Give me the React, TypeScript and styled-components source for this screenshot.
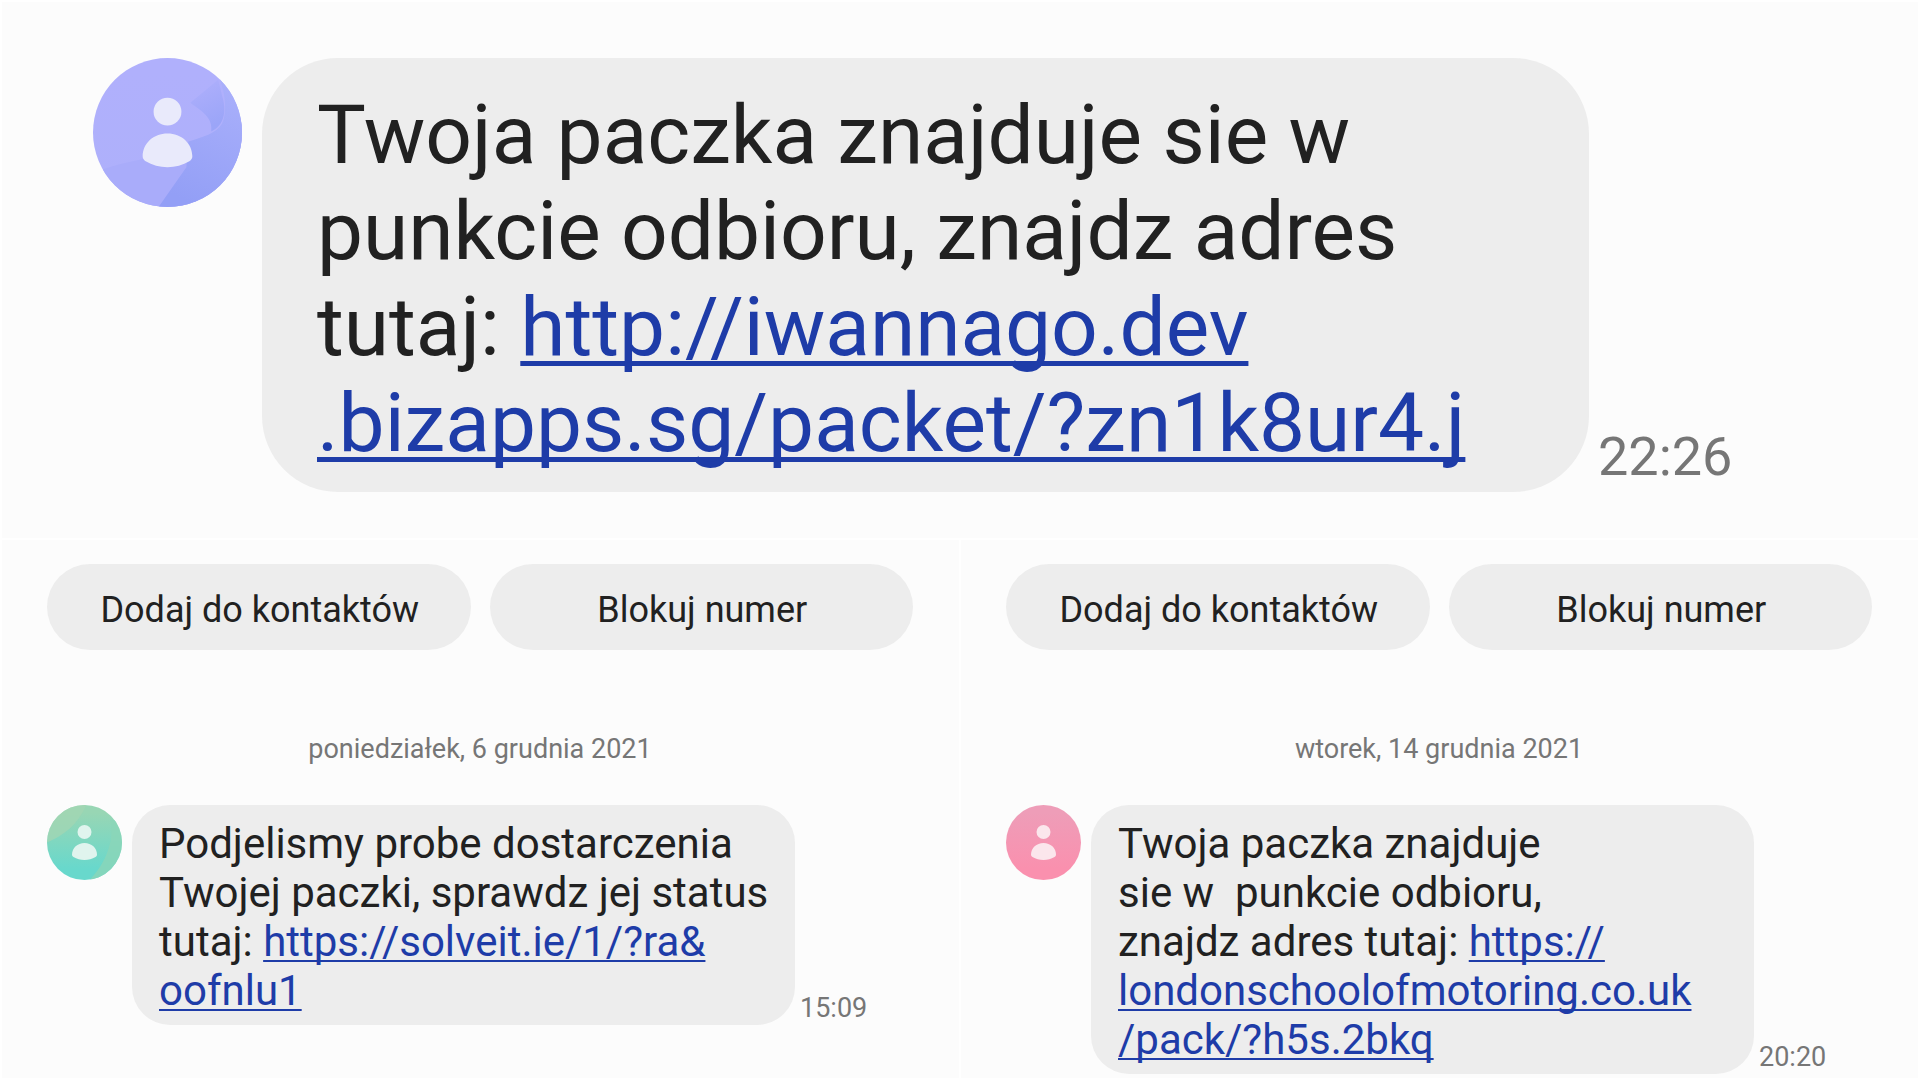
import React from "react";
import styled, { createGlobalStyle } from "styled-components";

const GlobalStyle = createGlobalStyle`
  *, *::before, *::after { box-sizing: border-box; }
  body {
    margin: 0;
    background: #ffffff;
    color: #212121;
    font-family: Roboto, "Noto Sans", sans-serif;
  }
`;

type Size = "large" | "small";

const Board = styled.main`
  display: grid;
  grid-template-columns: 1fr 1fr;
  grid-template-rows: auto 1fr;
  gap: 2px;
  min-height: 100vh;
  padding: 2px;
`;

const Panel = styled.section<{ $wide?: boolean }>`
  grid-column: ${(p) => (p.$wide ? "1 / -1" : "auto")};
  padding: ${(p) => (p.$wide ? "56px 91px 46px" : "24px 46px 4px 45px")};
  background: #fcfcfc;
`;

const Actions = styled.div`
  display: grid;
  grid-template-columns: 1fr 1fr;
  gap: 19px;
`;

const ActionButton = styled.button`
  height: 86px;
  padding: 5px 0 0 2px;
  border: 0;
  border-radius: 43px;
  background: #ededed;
  color: #212121;
  font: 400 36px/42px Roboto, "Noto Sans", sans-serif;
  cursor: pointer;
`;

const DateLabel = styled.time`
  display: block;
  margin: 82px 0 39px;
  color: #767676;
  font-size: 27px;
  line-height: 34px;
  text-align: center;
`;

const Row = styled.article<{ $size: Size }>`
  display: flex;
  align-items: flex-start;
  gap: ${(p) => (p.$size === "large" ? 20 : 10)}px;
`;

const AvatarDrawing = styled.svg<{ $size: Size }>`
  flex: none;
  width: ${(p) => (p.$size === "large" ? 149 : 75)}px;
  height: ${(p) => (p.$size === "large" ? 149 : 75)}px;
`;

const Bubble = styled.p<{ $size: Size }>`
  flex: 0 1 ${(p) => (p.$size === "large" ? 1327 : 663)}px;
  margin: 0;
  padding: ${(p) => (p.$size === "large" ? "29px 40px 21px 55px" : "14px 20px 10px 27px")};
  border-radius: ${(p) => (p.$size === "large" ? 76 : 38)}px;
  background: #ededed;
  font-size: ${(p) => (p.$size === "large" ? 82 : 42)}px;
  line-height: ${(p) => (p.$size === "large" ? 96 : 49)}px;
  white-space: pre-wrap;
`;

const MessageLink = styled.a<{ $size: Size }>`
  color: #1e3ca8;
  text-decoration: underline;
  text-decoration-skip-ink: none;
  text-decoration-thickness: ${(p) => (p.$size === "large" ? 5 : 2)}px;
  text-underline-offset: ${(p) => (p.$size === "large" ? 6 : 4)}px;
`;

const SentAt = styled.time<{ $size: Size }>`
  align-self: flex-end;
  margin-left: ${(p) => (p.$size === "large" ? -11 : -5)}px;
  color: #767676;
  font-size: ${(p) => (p.$size === "large" ? 54 : 27)}px;
  line-height: ${(p) => (p.$size === "large" ? 70 : 34)}px;
`;

type Tone = "violet" | "green" | "pink";

const tones: Record<Tone, { from: string; to: string; person: string }> = {
  violet: { from: "#b0b0fc", to: "#aeb0fb", person: "#e9eafb" },
  green: { from: "#98d6b4", to: "#68d8cc", person: "#e0f4ee" },
  pink: { from: "#ee9db8", to: "#fa90ae", person: "#fbe6ec" },
};

function Avatar({ tone, size }: { tone: Tone; size: Size }) {
  const t = tones[tone];
  return (
    <AvatarDrawing $size={size} viewBox="0 0 150 150" role="img" aria-label="Kontakt">
      <defs>
        <clipPath id={`disc-${tone}`}>
          <circle cx="75" cy="75" r="75" />
        </clipPath>
        <linearGradient id={`base-${tone}`} x1="0" y1="0" x2="0" y2="1">
          <stop offset="0.1" stopColor={t.from} />
          <stop offset="0.85" stopColor={t.to} />
        </linearGradient>
        {tone === "violet" && (
          <>
            <linearGradient id="wave" x1="0.8" y1="0" x2="0.5" y2="1">
              <stop offset="0" stopColor="#aab0fb" />
              <stop offset="1" stopColor="#939ff6" />
            </linearGradient>
            <linearGradient id="fold" x1="0" y1="0" x2="0.3" y2="1">
              <stop offset="0" stopColor="#b0b0fc" />
              <stop offset="1" stopColor="#9ba5f8" />
            </linearGradient>
          </>
        )}
      </defs>
      <g clipPath={`url(#disc-${tone})`}>
        <rect width="150" height="150" fill={`url(#base-${tone})`} />
        {tone === "violet" && (
          <>
            <path d="M10 112C35 104 50 103 66 97C90 90 122 83 150 60V150H0Z" fill="#a9acfa" />
            <path d="M127 20C135 40 134 58 130 66C124 76 110 80 96 84L94 110L66 150H150V20Z" fill="url(#wave)" />
            <path d="M98 45C110 54 121 60 119 74C132 68 134 54 131 42L126 22Z" fill="url(#fold)" />
          </>
        )}
        {tone === "green" && (
          <>
            <path d="M0 75C35 60 60 40 79 0H0Z" fill="#a3d6b3" opacity="0.75" />
            <path d="M126 30C136 65 120 115 85 150H150V30Z" fill="#8bd6b8" opacity="0.8" />
          </>
        )}
      </g>
      <circle cx="75" cy="54" r="14" fill={t.person} />
      <path d="M50 99C50 86 61 76 75 76C89 76 100 86 100 99C100 101 99 103 97 104C84 112 66 112 53 104C51 103 50 101 50 99Z" fill={t.person} />
    </AvatarDrawing>
  );
}

interface MessageProps {
  tone: Tone;
  size: Size;
  time: string;
  children: React.ReactNode;
}

function Message({ tone, size, time, children }: MessageProps) {
  return (
    <Row $size={size}>
      <Avatar tone={tone} size={size} />
      <Bubble $size={size}>{children}</Bubble>
      <SentAt $size={size}>{time}</SentAt>
    </Row>
  );
}

function ContactActions() {
  return (
    <Actions>
      <ActionButton type="button">Dodaj do kontaktów</ActionButton>
      <ActionButton type="button">Blokuj numer</ActionButton>
    </Actions>
  );
}

export default function App() {
  return (
    <>
      <GlobalStyle />
      <Board>
        <Panel $wide>
          <Message tone="violet" size="large" time="22:26">
            Twoja paczka znajduje sie w<br />
            punkcie odbioru, znajdz adres<br />
            tutaj:{" "}
            <MessageLink $size="large" href="#paczka">
              http://iwannago.dev<br />.bizapps.sg/packet/?zn1k8ur4.j
            </MessageLink>
          </Message>
        </Panel>
        <Panel>
          <ContactActions />
          <DateLabel dateTime="2021-12-06">poniedziałek, 6 grudnia 2021</DateLabel>
          <Message tone="green" size="small" time="15:09">
            Podjelismy probe dostarczenia<br />
            Twojej paczki, sprawdz jej status<br />
            tutaj:{" "}
            <MessageLink $size="small" href="#status">
              https://solveit.ie/1/?ra&amp;<br />oofnlu1
            </MessageLink>
          </Message>
        </Panel>
        <Panel>
          <ContactActions />
          <DateLabel dateTime="2021-12-14">wtorek, 14 grudnia 2021</DateLabel>
          <Message tone="pink" size="small" time="20:20">
            Twoja paczka znajduje<br />
            {"sie w  punkcie odbioru,"}<br />
            znajdz adres tutaj:{" "}
            <MessageLink $size="small" href="#adres">
              https://<br />londonschoolofmotoring.co.uk<br />/pack/?h5s.2bkq
            </MessageLink>
          </Message>
        </Panel>
      </Board>
    </>
  );
}
